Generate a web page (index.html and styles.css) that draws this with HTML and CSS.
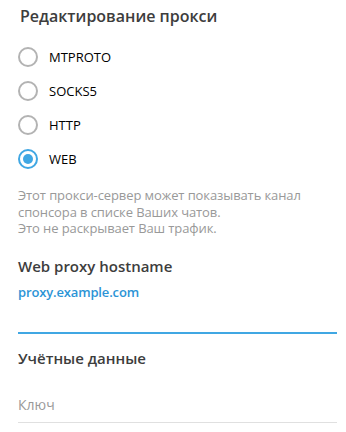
FILE: index.html
```html
<!DOCTYPE html>
<html lang="ru">
<head>
<meta charset="utf-8">
<link rel="stylesheet" href="styles.css">
</head>
<body>
<div class="box">
  <h1 class="title">Редактирование прокси</h1>
  <div class="radios">
    <label class="radio"><span class="dot"></span><span class="rlabel">MTPROTO</span></label>
    <label class="radio"><span class="dot"></span><span class="rlabel">SOCKS5</span></label>
    <label class="radio"><span class="dot"></span><span class="rlabel">HTTP</span></label>
    <label class="radio on"><span class="dot"></span><span class="rlabel">WEB</span></label>
  </div>
  <p class="about">Этот прокси-сервер может показывать канал спонсора в списке Ваших чатов.<br>Это не раскрывает Ваш трафик.</p>
  <h2 class="section">Web proxy hostname</h2>
  <div class="field active"><span class="value">proxy.example.com</span></div>
  <h2 class="section second">Учётные данные</h2>
  <div class="field"><span class="placeholder">Ключ</span></div>
</div>
</body>
</html>
```
FILE: styles.css
```css
html, body {
  margin: 0;
  padding: 0;
  background: #ffffff;
}
body {
  font-family: "Open Sans", "Noto Sans", sans-serif;
  width: 346px;
  height: 432px;
  overflow: hidden;
}
.box {
  padding: 5px 9px 0 18px;
  display: flex;
  flex-direction: column;
}
.title {
  margin: 0 0 0 2px;
  font-size: 16px;
  line-height: 22px;
  font-weight: 600;
  color: #3d3d3d;
}
.radios {
  display: flex;
  flex-direction: column;
  margin-top: 13px;
}
.radio {
  display: flex;
  align-items: center;
  height: 34px;
}
.dot {
  box-sizing: border-box;
  width: 20px;
  height: 20px;
  border-radius: 50%;
  border: 2px solid #b3b3b3;
  display: flex;
  align-items: center;
  justify-content: center;
}
.radio.on .dot {
  border-color: #40a7e3;
}
.radio.on .dot::after {
  content: "";
  width: 10px;
  height: 10px;
  border-radius: 50%;
  background: #40a7e3;
}
.rlabel {
  margin-left: 11px;
  font-size: 13px;
  color: #000;
}
.about {
  margin: 11px 0 0 0;
  font-size: 13px;
  line-height: 16.5px;
  letter-spacing: -0.1px;
  color: #999999;
}
.section {
  margin: 19px 0 0 0;
  font-size: 15px;
  line-height: 20px;
  font-weight: 600;
  color: #3d3d3d;
}
.section.second {
  margin-top: 14px;
}
.field {
  height: 54px;
  border-bottom: 1px solid #e0e0e0;
  font-size: 13px;
  line-height: 18px;
}
.field.active {
  height: 56px;
  border-bottom: 2px solid #40a7e3;
}
.value {
  display: block;
  margin-top: 7px;
  color: #2c94d6;
  font-weight: 600;
  letter-spacing: -0.15px;
}
.placeholder {
  display: block;
  margin-top: 28px;
  font-size: 14px;
  color: #999999;
}
```
